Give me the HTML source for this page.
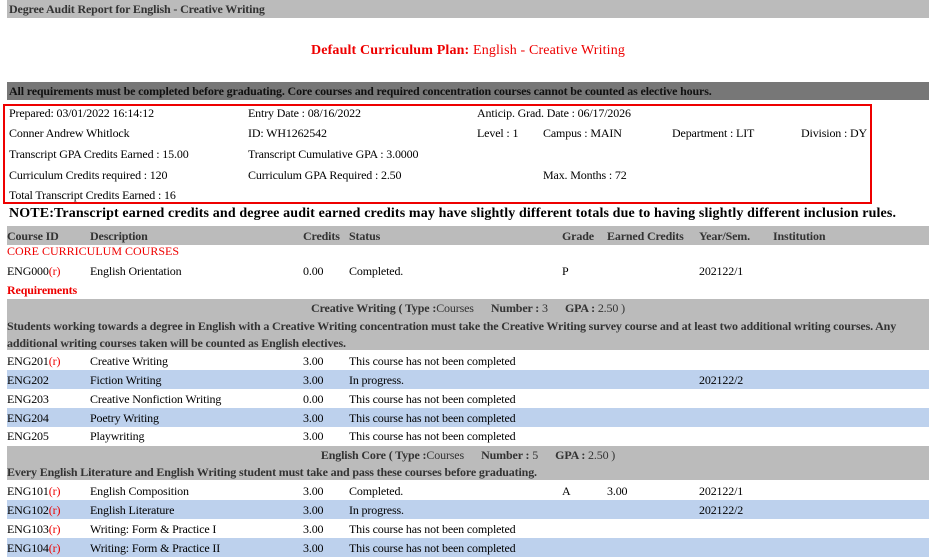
<!DOCTYPE html>
<html><head><style>
body{margin:0;width:936px;height:548px;overflow:hidden;background:#fff;font-family:"Liberation Serif",serif;font-size:12px;color:#000;position:relative;letter-spacing:-0.15px}
div{position:absolute;white-space:nowrap}
.bar{left:7px;width:922px;background:#bbbbbb}
.b{font-weight:bold}
.g{color:#333}
.r{color:#e00}
.row{left:7px;width:922px;height:19px}
.blue{background:#bdd1ed}
.row span{position:absolute;top:3px}
.c1{left:0}.c2{left:83px}.c3{left:296px}.c4{left:342px}.c5{left:555px}.c6{left:600px}.c7{left:692px}.c8{left:766px}
</style></head><body>
<div class="bar" style="top:0;height:18px"></div>
<div class="b g" style="left:9px;top:2px">Degree Audit Report for English - Creative Writing</div>
<div style="left:0;width:936px;top:43px;text-align:center;font-size:14px;color:#e00;letter-spacing:0.15px"><b>Default Curriculum Plan:</b> English - Creative Writing</div>
<div style="left:7px;top:82px;width:922px;height:18px;background:#777"></div>
<div class="b" style="left:9px;top:84px;color:#111">All requirements must be completed before graduating. Core courses and required concentration courses cannot be counted as elective hours.</div>
<div style="left:3px;top:104px;width:865px;height:96px;border:2px solid #e00"></div>
<div style="left:9px;top:106px">Prepared: 03/01/2022 16:14:12</div>
<div style="left:248px;top:106px">Entry Date : 08/16/2022</div>
<div style="left:477px;top:106px">Anticip. Grad. Date : 06/17/2026</div>
<div style="left:9px;top:126px">Conner Andrew Whitlock</div>
<div style="left:248px;top:126px">ID: WH1262542</div>
<div style="left:477px;top:126px">Level : 1</div>
<div style="left:543px;top:126px">Campus : MAIN</div>
<div style="left:672px;top:126px">Department : LIT</div>
<div style="left:801px;top:126px">Division : DY</div>
<div style="left:9px;top:147px">Transcript GPA Credits Earned : 15.00</div>
<div style="left:248px;top:147px">Transcript Cumulative GPA : 3.0000</div>
<div style="left:9px;top:168px">Curriculum Credits required : 120</div>
<div style="left:248px;top:168px">Curriculum GPA Required : 2.50</div>
<div style="left:543px;top:168px">Max. Months : 72</div>
<div style="left:9px;top:188px">Total Transcript Credits Earned : 16</div>
<div class="b" style="left:9px;top:206px;font-size:14px;letter-spacing:0.13px">NOTE:Transcript earned credits and degree audit earned credits may have slightly different totals due to having slightly different inclusion rules.</div>
<div class="row b g" style="top:226px;background:#bbb"><span class="c1">Course ID</span><span class="c2">Description</span><span class="c3">Credits</span><span class="c4">Status</span><span class="c5">Grade</span><span class="c6">Earned Credits</span><span class="c7">Year/Sem.</span><span class="c8">Institution</span></div>
<div class="r" style="left:7px;top:244px;letter-spacing:0">CORE CURRICULUM COURSES</div>
<div class="row" style="top:261px"><span class="c1">ENG000<font color="#e00">(r)</font></span><span class="c2">English Orientation</span><span class="c3">0.00</span><span class="c4">Completed.</span><span class="c5">P</span><span class="c7">202122/1</span></div>
<div class="r b" style="left:7px;top:283px">Requirements</div>
<div class="bar" style="top:299px;height:51px"></div>
<div class="g" style="left:0;width:936px;top:301px;text-align:center"><b>Creative Writing ( Type :</b>Courses &nbsp; &nbsp; &nbsp;<b>Number : </b>3 &nbsp; &nbsp; &nbsp;<b>GPA : </b>2.50 )</div>
<div class="b g" style="left:7px;top:318px;line-height:17px;white-space:normal;width:920px">Students working towards a degree in English with a Creative Writing concentration must take the Creative Writing survey course and at least two additional writing courses. Any additional writing courses taken will be counted as English electives.</div>
<div class="row" style="top:351px"><span class="c1">ENG201<font color="#e00">(r)</font></span><span class="c2">Creative Writing</span><span class="c3">3.00</span><span class="c4">This course has not been completed</span></div>
<div class="row blue" style="top:370px"><span class="c1">ENG202</span><span class="c2">Fiction Writing</span><span class="c3">3.00</span><span class="c4">In progress.</span><span class="c7">202122/2</span></div>
<div class="row" style="top:389px"><span class="c1">ENG203</span><span class="c2">Creative Nonfiction Writing</span><span class="c3">0.00</span><span class="c4">This course has not been completed</span></div>
<div class="row blue" style="top:408px"><span class="c1">ENG204</span><span class="c2">Poetry Writing</span><span class="c3">3.00</span><span class="c4">This course has not been completed</span></div>
<div class="row" style="top:426px"><span class="c1">ENG205</span><span class="c2">Playwriting</span><span class="c3">3.00</span><span class="c4">This course has not been completed</span></div>
<div class="bar" style="top:446px;height:34px"></div>
<div class="g" style="left:0;width:936px;top:448px;text-align:center"><b>English Core ( Type :</b>Courses &nbsp; &nbsp; &nbsp;<b>Number : </b>5 &nbsp; &nbsp; &nbsp;<b>GPA : </b>2.50 )</div>
<div class="b g" style="left:7px;top:465px">Every English Literature and English Writing student must take and pass these courses before graduating.</div>
<div class="row" style="top:481px"><span class="c1">ENG101<font color="#e00">(r)</font></span><span class="c2">English Composition</span><span class="c3">3.00</span><span class="c4">Completed.</span><span class="c5">A</span><span class="c6">3.00</span><span class="c7">202122/1</span></div>
<div class="row blue" style="top:500px"><span class="c1">ENG102<font color="#e00">(r)</font></span><span class="c2">English Literature</span><span class="c3">3.00</span><span class="c4">In progress.</span><span class="c7">202122/2</span></div>
<div class="row" style="top:519px"><span class="c1">ENG103<font color="#e00">(r)</font></span><span class="c2">Writing: Form &amp; Practice I</span><span class="c3">3.00</span><span class="c4">This course has not been completed</span></div>
<div class="row blue" style="top:538px"><span class="c1">ENG104<font color="#e00">(r)</font></span><span class="c2">Writing: Form &amp; Practice II</span><span class="c3">3.00</span><span class="c4">This course has not been completed</span></div>
</body></html>
